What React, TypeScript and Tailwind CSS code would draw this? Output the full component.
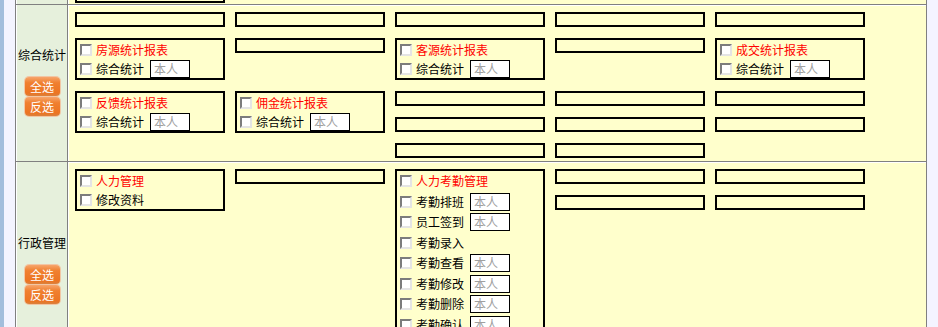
import React from "react";

const CB = () => (
  <div className="box-border w-[12px] h-[12px] shrink-0 border-2 border-t-[#7c7c7c] border-l-[#7c7c7c] border-r-[#e4e4e4] border-b-[#e4e4e4] bg-white" />
);

const Inp = () => (
  <div className="box-border ml-[6px] w-[40px] h-[18px] shrink-0 border-[1.5px] border-black bg-white pl-[3px] text-[12px] leading-[15px] text-[#a0a0a0]">
    本人
  </div>
);

const Row = ({ text, red, input, h = "h-[19px]" }: { text: string; red?: boolean; input?: boolean; h?: string }) => (
  <div className={`flex items-center ${h}`}>
    <CB />
    <span className={`ml-[4px] text-[12px] leading-[14px] whitespace-nowrap ${red ? "text-[#ff0000]" : "text-black"}`}>{text}</span>
    {input && <Inp />}
  </div>
);

const Empty = () => <div className="box-border w-[150px] h-[15px] border-2 border-black shrink-0" />;

const Stack = ({ n }: { n: number }) => (
  <div className="flex flex-col gap-[11px] w-[150px]">
    {Array.from({ length: n }).map((_, i) => (
      <Empty key={i} />
    ))}
  </div>
);

const Report = ({ title }: { title: string }) => (
  <div className="box-border w-[150px] h-[42px] border-2 border-black pl-[3px] shrink-0">
    <Row text={title} red />
    <Row text="综合统计" input />
  </div>
);

const Btn = ({ t }: { t: string }) => (
  <div className="w-[35px] h-[19px] rounded-[4px] bg-[linear-gradient(to_bottom,#f7a56c_0%,#f08030_30%,#ec7422_85%,#d9823f_100%)] text-white text-[12px] leading-[19px] text-center shadow-[0_0_0_1px_#f2c6a4]">
    {t}
  </div>
);

const Label = ({ t, pb }: { t: string; pb?: string }) => (
  <div className={`box-border w-[52px] shrink-0 bg-[#e6f0dc] border-l border-l-white border-r border-r-[#808080] flex flex-col items-center justify-center ${pb ?? ""}`}>
    <div className="text-[12px] leading-[16px] text-black whitespace-nowrap">{t}</div>
    <div className="mt-[14px] flex flex-col gap-[1px]">
      <Btn t="全选" />
      <Btn t="反选" />
    </div>
  </div>
);

export default function App() {
  return (
    <div className="w-[938px] h-[327px] overflow-hidden flex bg-[#f4f4ff] font-['Noto_Sans_CJK_SC','Noto_Sans',sans-serif]">
      <div className="w-[4px] shrink-0 bg-[#a3bedc]" />
      <div className="w-[11px] shrink-0" />
      <div className="box-border w-[912px] shrink-0 border-l border-r border-[#808080] flex flex-col">
        {/* top partial row */}
        <div className="flex h-[4px] shrink-0">
          <div className="box-border w-[52px] shrink-0 bg-[#e6f0dc] border-l border-l-white border-r border-r-[#808080]" />
          <div className="flex-1 bg-[#ffffcc] border-l border-l-white pl-[6px]">
            <div className="box-border w-[150px] h-[3px] border-x-2 border-b-2 border-black" />
          </div>
        </div>
        {/* section 1 */}
        <div className="flex h-[157px] shrink-0 border-t border-[#808080]">
          <Label t="综合统计" pb="pb-[3px]" />
          <div className="flex-1 bg-[#ffffcc] border-l border-l-white border-t border-t-white pl-[6px] pt-[6px] flex flex-col gap-[11px]">
            <div className="flex gap-[10px] items-start">
              <Empty />
              <Empty />
              <Empty />
              <Empty />
              <Empty />
            </div>
            <div className="flex gap-[10px] items-start">
              <Report title="房源统计报表" />
              <Empty />
              <Report title="客源统计报表" />
              <Empty />
              <Report title="成交统计报表" />
            </div>
            <div className="flex gap-[10px] items-start">
              <Report title="反馈统计报表" />
              <Report title="佣金统计报表" />
              <Stack n={3} />
              <Stack n={3} />
              <Stack n={2} />
            </div>
          </div>
        </div>
        {/* section 2 */}
        <div className="flex h-[215px] shrink-0 border-t border-[#808080]">
          <Label t="行政管理" />
          <div className="flex-1 bg-[#ffffcc] border-l border-l-white border-t border-t-white pl-[6px] pt-[6px] flex gap-[10px] items-start overflow-hidden">
            <div className="box-border w-[150px] h-[42px] border-2 border-black pl-[3px] shrink-0">
              <Row text="人力管理" red />
              <Row text="修改资料" />
            </div>
            <Empty />
            <div className="box-border w-[150px] border-2 border-black pl-[3px] shrink-0">
              <Row text="人力考勤管理" red h="h-[20.5px]" />
              <Row text="考勤排班" input h="h-[20.5px]" />
              <Row text="员工签到" input h="h-[20.5px]" />
              <Row text="考勤录入" h="h-[20.5px]" />
              <Row text="考勤查看" input h="h-[20.5px]" />
              <Row text="考勤修改" input h="h-[20.5px]" />
              <Row text="考勤删除" input h="h-[20.5px]" />
              <Row text="考勤确认" input h="h-[20.5px]" />
              <Row text="考勤统计" input h="h-[20.5px]" />
            </div>
            <Stack n={2} />
            <Stack n={2} />
          </div>
        </div>
      </div>
    </div>
  );
}
